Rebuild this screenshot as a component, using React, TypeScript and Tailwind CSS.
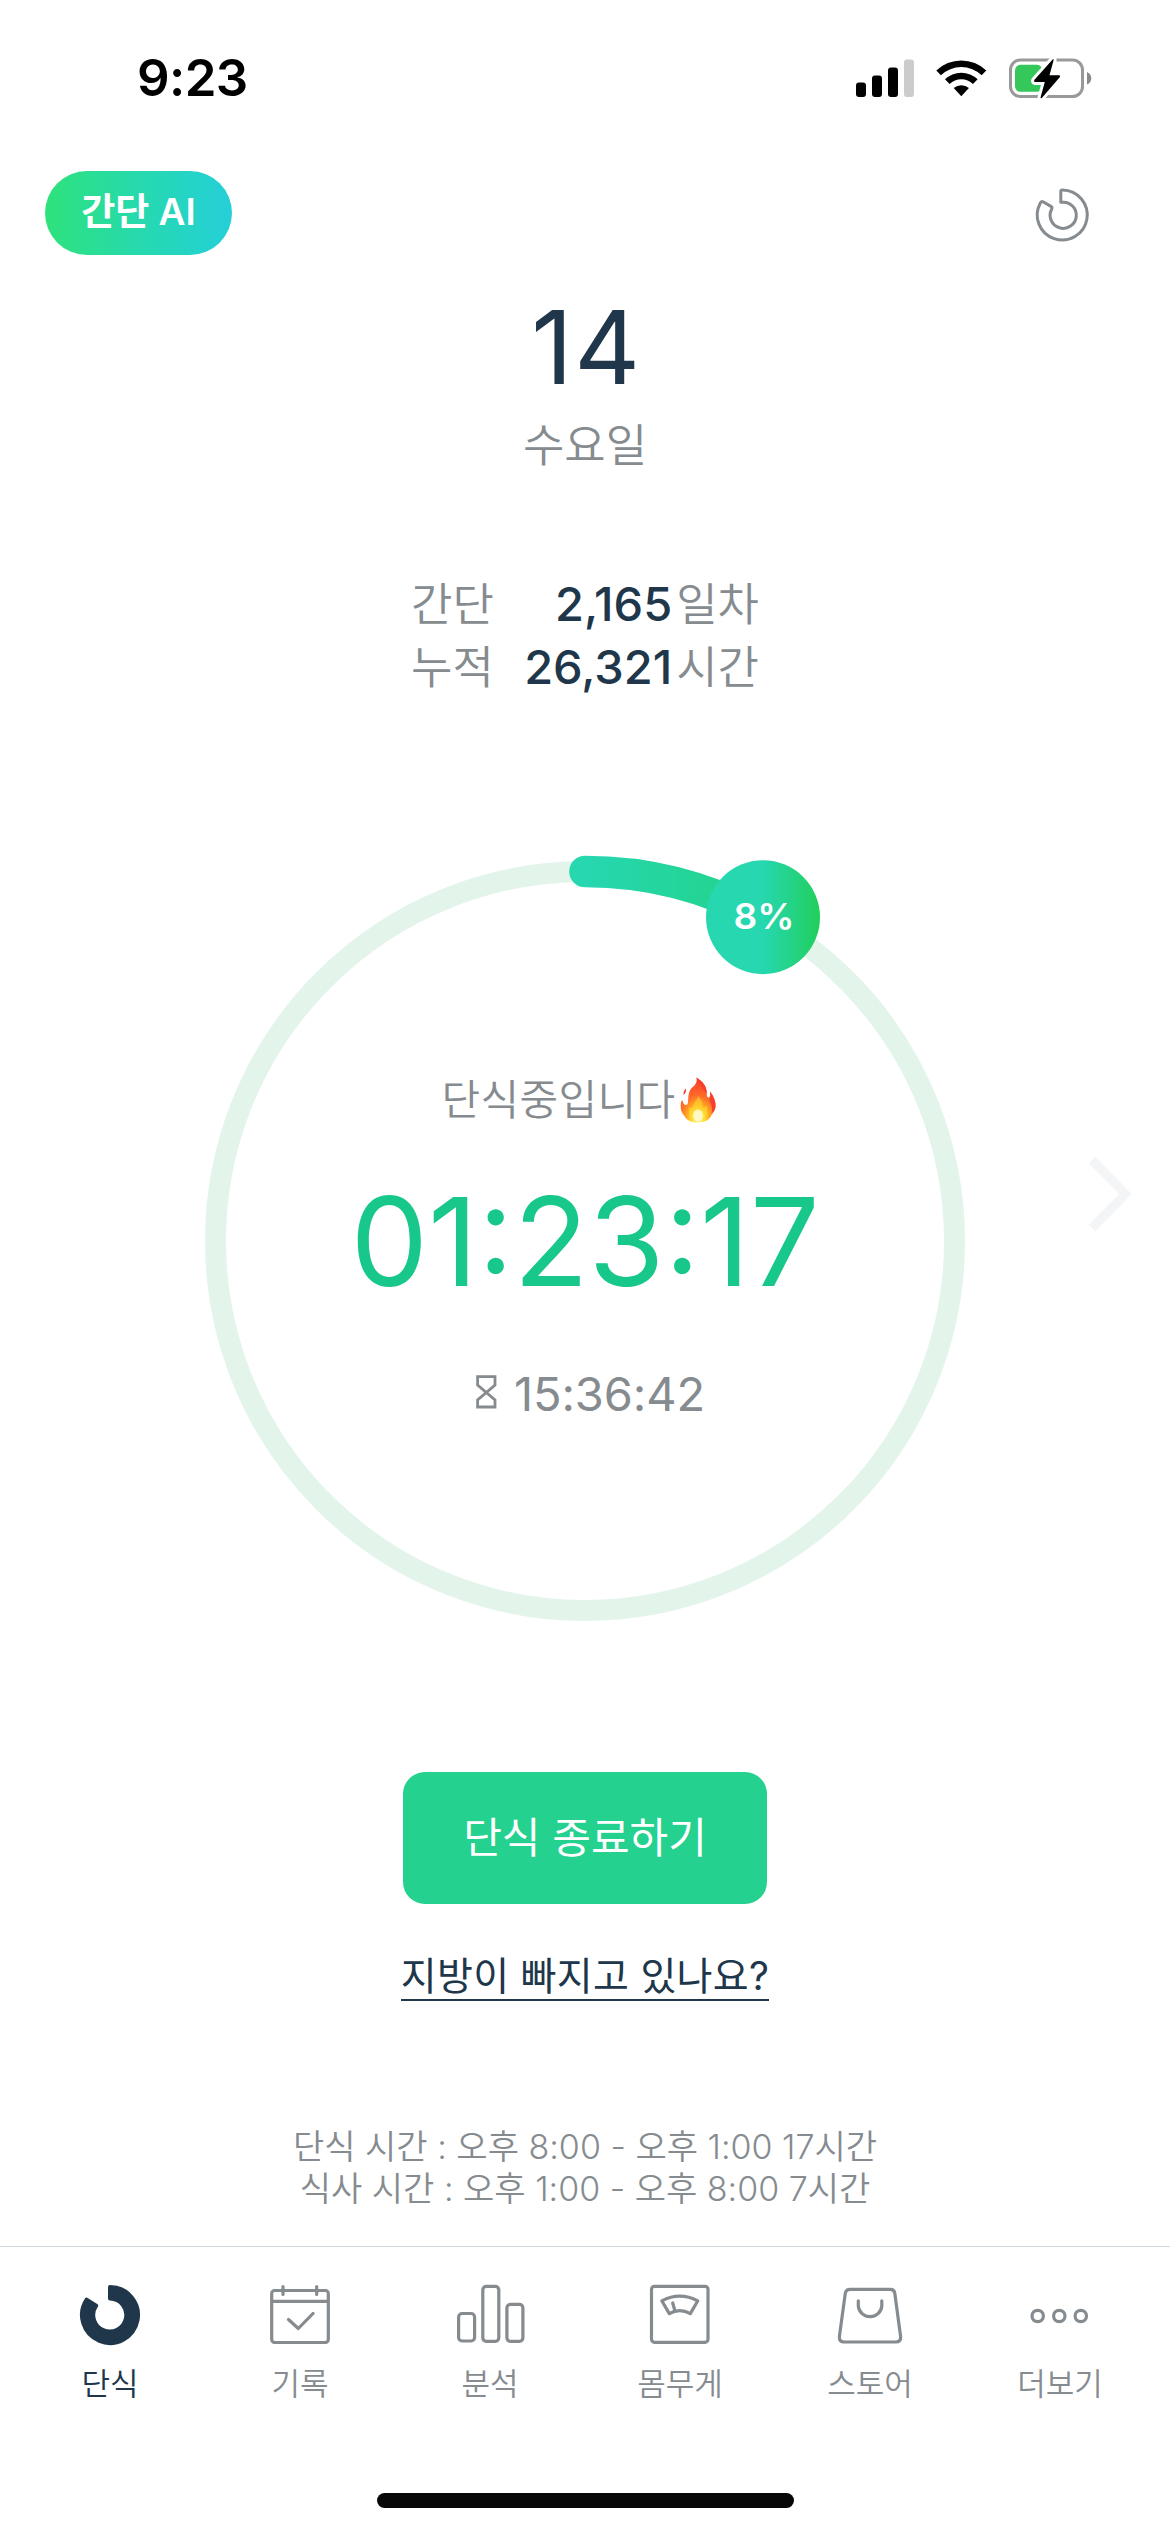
import type { ReactNode } from 'react';

type NavItem = {
  label: string;
  icon: ReactNode;
  active?: boolean;
};

type StatRowProps = {
  label: string;
  value: string;
  unit: string;
};

const RING_RADIUS = 369.5;
const RING_CENTER = 386;
const PROGRESS = 0.08;

const angle = PROGRESS * Math.PI * 2;
const badgeX = RING_CENTER + RING_RADIUS * Math.sin(angle);
const badgeY = RING_CENTER - RING_RADIUS * Math.cos(angle);

const STATS: StatRowProps[] = [
  { label: '간단', value: '2,165', unit: '일차' },
  { label: '누적', value: '26,321', unit: '시간' },
];

const NAV_ITEMS: NavItem[] = [
  {
    label: '단식',
    active: true,
    icon: (
      <path
        d="M38 12A28 28 0 1 1 14.6 24.6L24.2 30.6A16.5 16.5 0 1 0 38 23.5Z"
        fill="currentColor"
        strokeWidth="4"
        transform="translate(2 0)"
      />
    ),
  },
  {
    label: '기록',
    icon: (
      <>
        <rect x="11.7" y="15.5" width="56.6" height="52" rx="3" />
        <path d="M12 26.3H68M23 11.5V19.5M56.7 11.5V19.5M28.5 44.5L38.3 53.5L53 38.5" />
      </>
    ),
  },
  {
    label: '분석',
    icon: (
      <>
        <rect x="8.6" y="38.5" width="16" height="27.5" rx="3.5" />
        <rect x="32.8" y="11.3" width="16" height="55" rx="3.5" />
        <rect x="56.9" y="29.3" width="16" height="37" rx="3.5" />
      </>
    ),
  },
  {
    label: '몸무게',
    icon: (
      <>
        <rect x="11.5" y="11.3" width="56.5" height="56" rx="3" />
        <path d="M21.8 25.8Q39.8 16.5 57.8 25.8L50.3 38.6Q39.8 32.5 29.3 38.6ZM32.7 28L35 36" />
      </>
    ),
  },
  {
    label: '스토어',
    icon: (
      <>
        <path d="M20 14.3H60.3Q64.3 14.3 64.8 18.3L70.6 61.5Q71 67 66 67H14Q9 67 9.4 61.5L15.3 18.3Q16 14.3 20 14.3Z" />
        <path d="M28.3 25.8V31A11.8 11.8 0 0 0 51.8 31V25.8" />
      </>
    ),
  },
  {
    label: '더보기',
    icon: (
      <>
        <circle cx="17.7" cy="41" r="5.7" />
        <circle cx="39.3" cy="41" r="5.7" />
        <circle cx="60.8" cy="41" r="5.7" />
      </>
    ),
  },
];

function StatusBar() {
  return (
    <div className="h-[155px] flex items-center justify-between pl-[137px] pr-[78px]">
      <span className="text-[51px] leading-none font-semibold text-black tracking-[-0.6px]">
        9:23
      </span>
      <svg width="236" height="44" viewBox="0 0 236 44">
        <rect x="0" y="26.5" width="10" height="14.5" rx="3" />
        <rect x="16" y="19.5" width="10" height="21.5" rx="3" />
        <rect x="32" y="11.5" width="10" height="29.5" rx="3" />
        <rect x="48" y="3.5" width="10" height="37.5" rx="3" fill="#cccccc" />
        <g transform="translate(80 3.5)">
          <path d="M0.3 11A36 36 0 0 1 50.3 11L45.7 15.7A29.5 29.5 0 0 0 4.9 15.7Z" />
          <path d="M9 19.8A23.5 23.5 0 0 1 41.6 19.8L37 24.4A17 17 0 0 0 13.6 24.4Z" />
          <path d="M17.7 28.6A11.5 11.5 0 0 1 32.9 28.6L25.3 36.8Z" />
        </g>
        <g transform="translate(153 2.5)">
          <rect
            x="1.5"
            y="1.5"
            width="72"
            height="36.5"
            rx="10"
            fill="none"
            stroke="#999999"
            strokeWidth="3"
          />
          <path d="M78 13.5Q82.3 15.5 82.3 19.7Q82.3 24 78 26Z" fill="#8a8a8a" />
          <rect x="6" y="6.3" width="27.5" height="27" rx="5.5" fill="#34c759" />
          <path
            d="M43.6 1Q45 -0.5 44.5 2L40.5 16.8H50.4Q51.8 17.2 50.7 18.8L32.8 39.4Q31 40.7 31.8 38L35.8 23.5H25.8Q24.3 23 25.5 21.3Z"
            stroke="#ffffff"
            strokeWidth="6"
            strokeLinejoin="round"
            paintOrder="stroke"
          />
        </g>
      </svg>
    </div>
  );
}

function Header() {
  return (
    <header className="h-[116px] flex items-center justify-between pl-[45px] pr-[78px]">
      <button className="w-[187px] h-[84px] pb-[3px] rounded-full bg-linear-to-r from-[#2fe27a] to-[#26cfd8] text-white text-[37px] leading-none font-semibold">
        간단 AI
      </button>
      <svg
        width="60"
        height="60"
        viewBox="0 0 60 60"
        fill="none"
        stroke="#858b8f"
        strokeWidth="3"
        strokeLinejoin="round"
        className="mt-1"
      >
        <path d="M28.8 6.5Q28.8 5 30.5 5A25 25 0 1 1 8.2 18.2Q9 16 11 16.8L19 21.4Q20.5 22.3 19.6 24.2A13.1 13.1 0 1 0 30 17.2H28.8Z" />
      </svg>
    </header>
  );
}

function StatRow({ label, value, unit }: StatRowProps) {
  return (
    <div className="h-[63px] flex items-center justify-between text-[45px] leading-none font-[350] text-[#858b8f]">
      <span className="pt-0.5">{label}</span>
      <span className="flex items-center">
        <span className="text-[47px] font-medium text-[#20364a]">{value}</span>
        <span className="ml-1 pt-0.5">{unit}</span>
      </span>
    </div>
  );
}

function Flame() {
  return (
    <svg width="36" height="46" viewBox="0 0 36 46" className="ml-1">
      <defs>
        <radialGradient id="flame" cx="0.5" cy="0.92" r="0.85">
          <stop offset="0" stopColor="#fff9b0" />
          <stop offset="0.2" stopColor="#ffe234" />
          <stop offset="0.4" stopColor="#ffa51f" />
          <stop offset="0.62" stopColor="#ff6a2a" />
          <stop offset="1" stopColor="#f8402a" />
        </radialGradient>
      </defs>
      <path
        d="M16.500 0.500C22 4 27 9 26.800 16.500C26.700 19 27 20.500 28.500 20.500C30.500 20.500 30.500 17 30 14.500C34 19.500 36 25 35.500 30C35 34 33 36 31.500 38C30 42.500 25 45.500 18 45.500C10.500 45.500 6.500 43 4.500 39C1.500 36 0.500 32 0.700 28C0.800 25.500 1.500 24 2.300 23C3 26 4 28 6 28C8 28 8 25 8.200 22C8.500 15 10.500 11.500 14 9C16.500 6.500 17 4 16.500 0.500Z"
        fill="url(#flame)"
      />
      <path
        d="M16.500 0.500C22 4 27 9 26.800 16.500C24 13 19 8 16.500 0.500ZM30 14.500C34 19.500 36 25 35.500 30C35 33 33 35 31.500 36.500C33 30 31 27 29.500 23C30.500 20.500 30.500 17 30 14.500Z"
        fill="#f5402f"
      />
      <path
        d="M18 19C21 22 23 25 22.500 30C24 31.500 26 30 26.500 28C29 34 27 43 18 43.500C9 43 8 36 9.500 30C11 32 13 31 13.500 28C14 25 17 23 18 19Z"
        fill="#ffe034"
        opacity="0.5"
      />
      <ellipse cx="18" cy="38.5" rx="5" ry="6" fill="#fffde0" opacity="0.8" />
      <path d="M6 11.500Q3 14 3.500 18Q6.500 15.500 6 11.500Z" fill="#f5402f" />
    </svg>
  );
}

function Hourglass() {
  return (
    <svg
      width="21"
      height="34"
      viewBox="0 0 21 34"
      fill="none"
      stroke="#858b8f"
      strokeWidth="2.8"
      className="mb-[3px]"
    >
      <path d="M1.600 1.700H19V10L1.600 25V32H19V25L1.600 10Z" />
    </svg>
  );
}

function ProgressRing() {
  return (
    <div className="relative mt-[157px] h-[772px] flex justify-center">
      <svg width="772" height="772" viewBox="0 0 772 772">
        <defs>
          <linearGradient id="arc" gradientUnits="userSpaceOnUse" x1="386" y1="0" x2="564" y2="0">
            <stop offset="0" stopColor="#26d7b0" />
            <stop offset="1" stopColor="#22d388" />
          </linearGradient>
          <linearGradient id="badge">
            <stop offset="0.5" stopColor="#26d7b0" />
            <stop offset="1" stopColor="#21cf5c" />
          </linearGradient>
        </defs>
        <circle
          cx={RING_CENTER}
          cy={RING_CENTER}
          r={RING_RADIUS}
          fill="none"
          stroke="#e3f5eb"
          strokeWidth="21"
        />
        <path
          d={`M${RING_CENTER} ${RING_CENTER - RING_RADIUS}A${RING_RADIUS} ${RING_RADIUS} 0 0 1 ${badgeX} ${badgeY}`}
          fill="none"
          stroke="url(#arc)"
          strokeWidth="31.5"
          strokeLinecap="round"
        />
        <circle cx={badgeX} cy={badgeY} r="57" fill="url(#badge)" />
        <text
          x={badgeX + 1}
          y={badgeY + 12}
          textAnchor="middle"
          textLength="61"
          lengthAdjust="spacingAndGlyphs"
          fill="#ffffff"
          className="text-[35px] font-semibold"
        >
          8%
        </text>
      </svg>
      <div className="absolute inset-0 flex flex-col items-center pt-[210px]">
        <div className="h-[70px] pr-[13px] flex items-center text-[42px] leading-none font-[350] tracking-[0.4px] text-[#858b8f]">
          단식중입니다
          <Flame />
        </div>
        <div className="mt-[26px] h-[160px] flex items-center text-[123px] leading-none text-[#18c78a]">
          01:23:17
        </div>
        <div className="mt-[42px] h-[60px] pl-[11px] flex items-center gap-[17px] text-[47px] leading-none text-[#858b8f]">
          <Hourglass />
          <span className="tracking-[-0.1px]">15:36:42</span>
        </div>
      </div>
      <svg
        width="48"
        height="80"
        viewBox="0 0 48 80"
        fill="none"
        stroke="#f4f5f7"
        strokeWidth="9"
        className="absolute right-[36px] top-[299px]"
      >
        <path d="M6 6L39.500 40L6 74" />
      </svg>
    </div>
  );
}

function BottomNav() {
  return (
    <nav className="mt-[36px] h-[247px] border-t border-[#d2d9df] px-[15px] flex">
      {NAV_ITEMS.map(({ label, icon, active }) => (
        <div
          key={label}
          className={
            active
              ? 'w-[190px] pt-[28px] flex flex-col items-center text-[#20364a]'
              : 'w-[190px] pt-[28px] flex flex-col items-center text-[#858b8f]'
          }
        >
          <svg
            width="80"
            height="80"
            viewBox="0 0 80 80"
            fill="none"
            stroke="currentColor"
            strokeWidth="3.2"
            strokeLinecap="round"
            strokeLinejoin="round"
          >
            {icon}
          </svg>
          <span className="mt-[9px] text-[31px] leading-10 font-[350]">{label}</span>
        </div>
      ))}
    </nav>
  );
}

export default function App() {
  return (
    <div className="w-[1170px] h-[2532px] overflow-hidden bg-white flex flex-col font-['Inter','Noto_Sans_CJK_KR',sans-serif]">
      <StatusBar />
      <Header />
      <div className="mt-4 h-[120px] pl-[3px] flex items-center justify-center text-[102px] leading-none tracking-[1.5px] text-[#20364a]">
        14
      </div>
      <div className="mt-2 h-[60px] flex items-center justify-center text-[45px] leading-none font-[350] text-[#858b8f]">
        수요일
      </div>
      <div className="mt-[97px] w-[348px] self-center">
        {STATS.map((stat) => (
          <StatRow key={stat.label} {...stat} />
        ))}
      </div>
      <ProgressRing />
      <button className="mt-[145px] w-[364px] h-[132px] shrink-0 self-center rounded-[22px] bg-[#24d18e] text-white text-[42px] leading-none">
        단식 종료하기
      </button>
      <a className="mt-12 h-[49px] self-center border-b-2 border-[#20364a] text-[39px] leading-[47px] tracking-[0.3px] text-[#20364a]">
        지방이 빠지고 있나요?
      </a>
      <div className="mt-[125px] text-center text-[34px] leading-[42px] font-[350] text-[#858b8f]">
        <p>단식 시간 : 오후 8:00 - 오후 1:00 17시간</p>
        <p>식사 시간 : 오후 1:00 - 오후 8:00 7시간</p>
      </div>
      <BottomNav />
      <div className="w-[417px] h-[15px] shrink-0 self-center rounded-full bg-[#070707]" />
    </div>
  );
}
